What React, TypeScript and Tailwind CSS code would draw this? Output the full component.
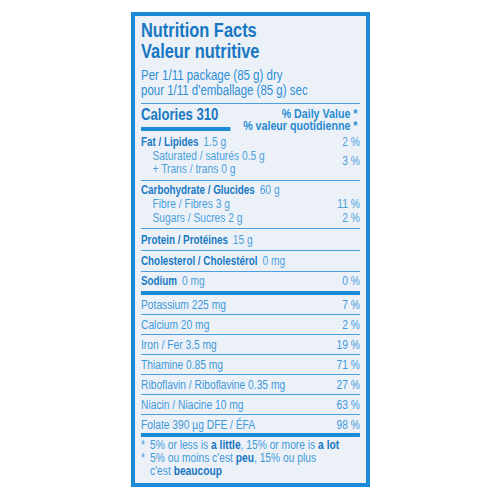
const minerals = [
  { label: "Potassium 225 mg", dv: "7 %" },
  { label: "Calcium 20 mg", dv: "2 %" },
  { label: "Iron / Fer 3.5 mg", dv: "19 %" },
  { label: "Thiamine 0.85 mg", dv: "71 %" },
  { label: "Riboflavin / Riboflavine 0.35 mg", dv: "27 %" },
  { label: "Niacin / Niacine 10 mg", dv: "63 %" },
  { label: "Folate 390 µg DFE / ÉFA", dv: "98 %" },
];

function Thin() {
  return <div className="h-px bg-[#4a9fdc]" />;
}

function Thick() {
  return <div className="h-[4px] bg-[#1c8ad6]" />;
}

function Main({ label, amount }: { label: string; amount: string }) {
  return (
    <span>
      <span className="text-[12px] font-bold text-[#1a79c3]">{label}</span>
      <span className="ml-[6px] text-[12.5px] text-[#4aa0dc]">{amount}</span>
    </span>
  );
}

// no narrow face is installed, so the label content is squeezed horizontally
export default function App() {
  return (
    <div className="min-h-[500px] bg-white pt-[12px] font-['Liberation_Sans',Arial,sans-serif]">
      <div className="mx-auto w-[239px] border-4 border-[#1c8ad6] bg-[#ecf1f8] px-[6px] pb-[5px] pt-[4px]">
        <div className="w-[267px] origin-top-left scale-x-[0.82]">
          <div className="text-[20px] font-bold leading-[21px] text-[#1877c2]">
            <div>Nutrition Facts</div>
            <div>Valeur nutritive</div>
          </div>
          <div className="mt-[6px] text-[14px] leading-[15px] text-[#2e8fd4]">
            <div>Per 1/11 package (85 g) dry</div>
            <div>pour 1/11 d'emballage (85 g) sec</div>
          </div>
          <div className="mt-[5px]">
            <Thin />
          </div>

          <div className="flex justify-between">
            <div className="pt-px">
              <div className="text-[16px] font-bold leading-[20px] text-[#1877c2]">Calories 310</div>
              <div className="mt-[2px] h-[4px] w-[109px] bg-[#1c8ad6]" />
            </div>
            <div className="pr-[3px] pt-[4px] text-right text-[13px] font-bold leading-[12px] text-[#2a8bd2]">
              <div>% Daily Value *</div>
              <div>% valeur quotidienne *</div>
            </div>
          </div>

          <div className="pb-[4px] pt-[3px] text-[12.5px] text-[#4aa0dc]">
            <div className="flex justify-between leading-[14px]">
              <Main label="Fat / Lipides" amount="1.5 g" />
              <span>2 %</span>
            </div>
            <div className="mt-px flex items-center justify-between">
              <div className="pl-[14px] leading-[13px]">
                <div>Saturated / saturés 0.5 g</div>
                <div>+ Trans / trans 0 g</div>
              </div>
              <span className="mb-[3px]">3 %</span>
            </div>
          </div>
          <Thin />

          <div className="pb-[3px] pt-[2px] text-[12.5px] leading-[14px] text-[#4aa0dc]">
            <div className="flex justify-between">
              <Main label="Carbohydrate / Glucides" amount="60 g" />
            </div>
            <div className="flex justify-between pl-[14px]">
              <span>Fibre / Fibres 3 g</span>
              <span>11 %</span>
            </div>
            <div className="flex justify-between pl-[14px]">
              <span>Sugars / Sucres 2 g</span>
              <span>2 %</span>
            </div>
          </div>
          <Thin />

          <div className="pb-[3px] pt-[3px] leading-[14px]">
            <Main label="Protein / Protéines" amount="15 g" />
          </div>
          <Thin />

          <div className="pb-[3px] pt-[2px] leading-[14px]">
            <Main label="Cholesterol / Cholestérol" amount="0 mg" />
          </div>
          <Thin />

          <div className="flex justify-between pb-[3px] pt-[2px] text-[12.5px] leading-[14px] text-[#4aa0dc]">
            <Main label="Sodium" amount="0 mg" />
            <span>0 %</span>
          </div>
          <Thick />

          <div className="text-[12.5px] leading-[14px] text-[#3f99d9]">
            {minerals.map((m, i) => (
              <div key={m.label}>
                {i > 0 && <Thin />}
                <div className={`flex justify-between pt-[3px] ${i === minerals.length - 1 ? "pb-[1px]" : "pb-[2px]"}`}>
                  <span>{m.label}</span>
                  <span>{m.dv}</span>
                </div>
              </div>
            ))}
          </div>
          <Thick />

          <div className="pt-[2px] text-[12.5px] leading-[13px] text-[#3f99d9]">
            <div className="flex">
              <span className="w-[11px] shrink-0">*</span>
              <span>
                5% or less is <b className="text-[#1a76bf]">a little</b>, 15% or more is{" "}
                <b className="text-[#1a76bf]">a lot</b>
              </span>
            </div>
            <div className="flex">
              <span className="w-[11px] shrink-0">*</span>
              <span>
                5% ou moins c'est <b className="text-[#1a76bf]">peu</b>, 15% ou plus
                <br />
                c'est <b className="text-[#1a76bf]">beaucoup</b>
              </span>
            </div>
          </div>
        </div>
      </div>
    </div>
  );
}
